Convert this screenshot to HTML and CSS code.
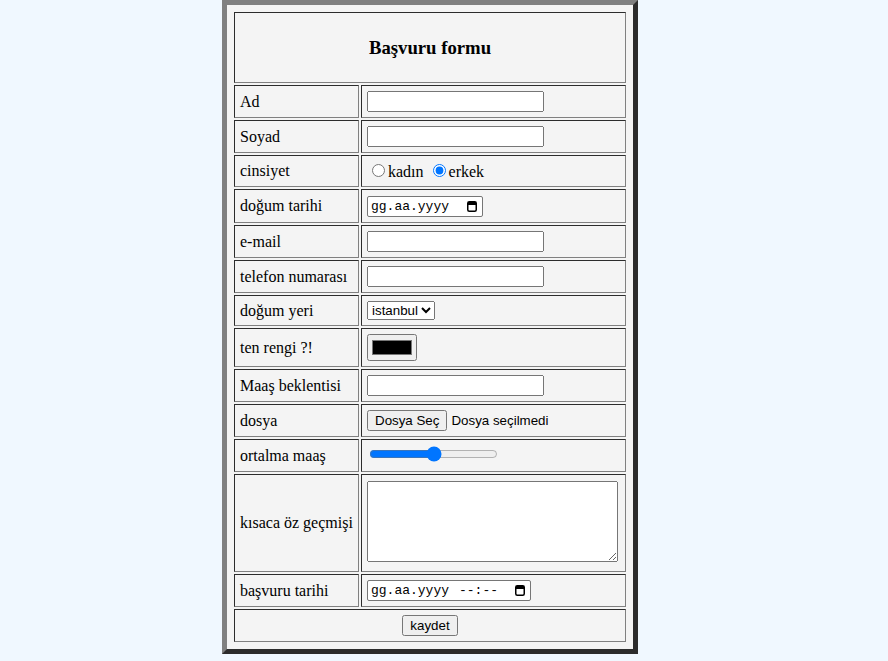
FILE: index.html
```html
<!DOCTYPE html>
<html lang="tr">
  <head>
    <meta charset="utf-8">
    <title>Başvuru formu</title>
    <link rel="stylesheet" href="styles.css">
  </head>
  <body>
    <form>
      <table class="form-table">
        <tr>
          <td colspan="2" class="title-cell"><h3>Başvuru formu</h3></td>
        </tr>
        <tr>
          <td class="label">Ad</td>
          <td><input type="text" class="text-field"></td>
        </tr>
        <tr>
          <td class="label">Soyad</td>
          <td><input type="text" class="text-field"></td>
        </tr>
        <tr>
          <td class="label">cinsiyet</td>
          <td>
            <input type="radio" name="cinsiyet" id="kadin"><label for="kadin">kadın</label>
            <input type="radio" name="cinsiyet" id="erkek" checked><label for="erkek">erkek</label>
          </td>
        </tr>
        <tr>
          <td class="label">doğum tarihi</td>
          <td>
            <span class="date-field birth">
              <span class="date-text">gg.aa.yyyy</span>
              <svg class="cal-icon" width="10" height="11" viewBox="0 0 10 11"><rect x="0.75" y="0.75" width="8.5" height="9.5" rx="1.5" fill="none" stroke="#000" stroke-width="1.5"/><rect x="1" y="1" width="8" height="3" fill="#000"/></svg>
            </span>
          </td>
        </tr>
        <tr>
          <td class="label">e-mail</td>
          <td><input type="email" class="text-field"></td>
        </tr>
        <tr>
          <td class="label">telefon numarası</td>
          <td><input type="tel" class="text-field"></td>
        </tr>
        <tr>
          <td class="label">doğum yeri</td>
          <td>
            <select class="city">
              <option>istanbul</option>
              <option>ankara</option>
              <option>izmir</option>
            </select>
          </td>
        </tr>
        <tr>
          <td class="label">ten rengi ?!</td>
          <td><input type="color" value="#000000"></td>
        </tr>
        <tr>
          <td class="label">Maaş beklentisi</td>
          <td><input type="number" class="text-field"></td>
        </tr>
        <tr>
          <td class="label">dosya</td>
          <td><button type="button" class="file-btn">Dosya Seç</button><span class="file-note">Dosya seçilmedi</span></td>
        </tr>
        <tr>
          <td class="label">ortalma maaş</td>
          <td><input type="range" class="slider"></td>
        </tr>
        <tr>
          <td class="label">kısaca öz geçmişi</td>
          <td><textarea class="bio"></textarea></td>
        </tr>
        <tr>
          <td class="label">başvuru tarihi</td>
          <td>
            <span class="date-field wide">
              <span class="date-text">gg.aa.yyyy</span>
              <span class="time-text">--:--</span>
              <svg class="cal-icon" width="10" height="11" viewBox="0 0 10 11"><rect x="0.75" y="0.75" width="8.5" height="9.5" rx="1.5" fill="none" stroke="#000" stroke-width="1.5"/><rect x="1" y="1" width="8" height="3" fill="#000"/></svg>
            </span>
          </td>
        </tr>
        <tr>
          <td colspan="2" class="submit-cell"><button type="submit" class="save-btn">kaydet</button></td>
        </tr>
      </table>
    </form>
  </body>
</html>
```

FILE: styles.css
```css
/* Page */
body {
  background-color: #f0f8ff;
  font-family: "Liberation Serif", "Times New Roman", serif;
  font-size: 16px;
  margin: 0;
  padding: 0;
}

/* The form table */
.form-table {
  width: 416px;
  margin-left: 222px;
  border: 5px outset gray;
  border-spacing: 2px;
  padding: 5px;
  background-color: #f4f4f4;
}
.form-table td {
  border: 1px inset gray;
  padding: 5px;
}
.label {
  width: 125px;
  box-sizing: border-box;
}
.title-cell {
  text-align: center;
}
.title-cell h3 {
  font-size: 18.72px;
  margin: 18.72px 0;
}
.submit-cell {
  text-align: center;
}

/* Controls */
input, select, textarea, button {
  font-family: "Liberation Sans", Arial, sans-serif;
  font-size: 13.33px;
}
.text-field {
  width: 177px;
  height: 21px;
  box-sizing: border-box;
}
.slider {
  margin-top: 1px;
  margin-bottom: 1px;
}
.bio {
  width: 251px;
  height: 81px;
  box-sizing: border-box;
  margin-top: 1px;
}

/* Date fields drawn like the native ones */
.date-field {
  display: inline-flex;
  align-items: center;
  box-sizing: border-box;
  width: 116px;
  height: 21px;
  padding: 0 5px 0 3px;
  border: 1px solid #767676;
  border-radius: 2px;
  background: #fff;
  font-family: "Liberation Mono", "DejaVu Sans Mono", monospace;
  font-size: 13px;
  vertical-align: middle;
}
.date-field.birth {
  margin-top: 1px;
}
.date-field.wide {
  width: 164px;
}
.time-text {
  margin-left: 10px;
}
.cal-icon {
  margin-left: auto;
}

.file-btn {
  margin-right: 4px;
}
.file-note {
  font-family: "Liberation Sans", Arial, sans-serif;
  font-size: 13.33px;
}
```
